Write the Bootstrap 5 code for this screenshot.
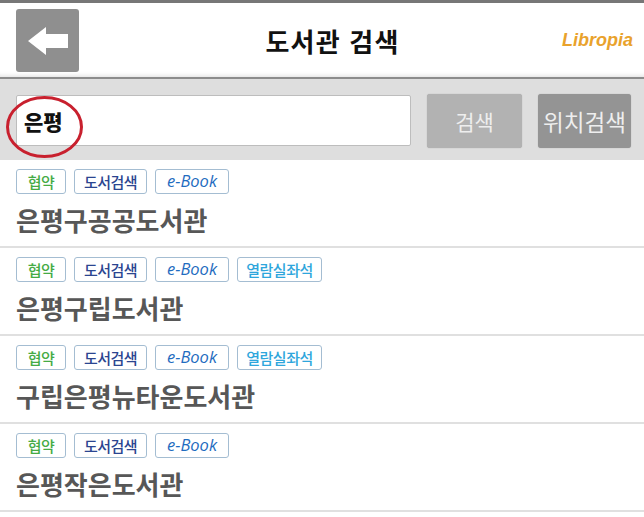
<!DOCTYPE html>
<html lang="ko">
<head>
<meta charset="utf-8">
<title>도서관 검색</title>
<link href="https://cdn.jsdelivr.net/npm/bootstrap@5.3.0/dist/css/bootstrap.min.css" rel="stylesheet">
<style>
html,body{height:517px;overflow:hidden;background:#fff}
body{font-family:"Noto Sans CJK KR","Liberation Sans",sans-serif}
.topstrip{height:3px;background:#777}
.appbar{height:76px;padding:6px 11px 0 16px;background:#fff;border-bottom:2px solid #8c8c8c;box-shadow:inset 0 -6px 5px -5px #ddd}
.backbtn{width:63px;height:63px;background:#8f8f8f;border-radius:3px;flex:none}
.apptitle{font-size:26px;font-weight:700;color:#111;letter-spacing:1.2px;line-height:1;margin:0 0 5px 24px}
.logo{font-family:"Liberation Sans",sans-serif;font-size:18px;font-weight:700;font-style:italic;color:#e9a22c;margin-bottom:6px}
.searchband{height:81px;background:#dedede;padding:15px 13px 0 16px;gap:16px;position:relative}
.searchbox{width:395px;height:51px;margin-top:1px;border:1px solid #bdbdbd;border-radius:2px;background:#fff;padding:0 7px;font-size:21px;font-weight:900;color:#111}
.searchbox:focus{outline:none}
.actbtn{height:54px;border:0;border-radius:3px;color:#eee;padding:0;font-size:22.5px;line-height:1;box-shadow:0 0 1px #999}
.actone{width:95px;background:#b2b2b2;font-size:21px}
.acttwo{width:93px;background:#949494}
.ring{position:absolute;left:6px;top:17px;width:77px;height:62px;pointer-events:none}
.libitem{height:88px;padding:9px 0 0 16px;border-bottom:2px solid #e0e0e0}
.tagline{gap:8px;height:25px}
.chip{height:25px;display:flex;align-items:center;justify-content:center;border:1px solid #a4bdd2;border-radius:3px;font-size:15px;font-weight:500;line-height:1;letter-spacing:-.5px;background:#fff}
.chipa{width:50px;color:#45ab45}
.chipb{width:73px;color:#2b4590}
.chipc{width:74px;color:#1f6cc0;font-family:"Open Sans",sans-serif;font-style:italic;font-size:16.5px;font-weight:500;letter-spacing:0}
.chipd{width:85px;color:#2ea6dc}
.libname{font-size:26px;font-weight:700;color:#575757;line-height:1;margin:13px 0 0;letter-spacing:0}
</style>
</head>
<body>
<div class="topstrip"></div>
<header class="appbar d-flex align-items-center justify-content-between">
  <div class="backbtn align-self-start d-flex align-items-center justify-content-center">
    <svg width="40" height="28" viewBox="0 0 40 28" aria-hidden="true"><path d="M0 14 18 0V7H40V21H18V28Z" fill="#fff"/></svg>
  </div>
  <h1 class="apptitle">도서관 검색</h1>
  <div class="logo">Libropia</div>
</header>
<div class="searchband d-flex align-items-start">
  <input class="searchbox" type="text" value="은평" aria-label="검색어">
  <button class="actbtn actone" type="button">검색</button>
  <button class="actbtn acttwo" type="button">위치검색</button>
  <svg class="ring" viewBox="0 0 77 62" aria-hidden="true"><ellipse cx="38.5" cy="31" rx="37" ry="29.5" fill="none" stroke="#c8202e" stroke-width="3"/></svg>
</div>
<main>
  <div class="libitem">
    <div class="tagline d-flex"><span class="chip chipa">협약</span><span class="chip chipb">도서검색</span><span class="chip chipc">e-Book</span></div>
    <p class="libname">은평구공공도서관</p>
  </div>
  <div class="libitem">
    <div class="tagline d-flex"><span class="chip chipa">협약</span><span class="chip chipb">도서검색</span><span class="chip chipc">e-Book</span><span class="chip chipd">열람실좌석</span></div>
    <p class="libname">은평구립도서관</p>
  </div>
  <div class="libitem">
    <div class="tagline d-flex"><span class="chip chipa">협약</span><span class="chip chipb">도서검색</span><span class="chip chipc">e-Book</span><span class="chip chipd">열람실좌석</span></div>
    <p class="libname">구립은평뉴타운도서관</p>
  </div>
  <div class="libitem">
    <div class="tagline d-flex"><span class="chip chipa">협약</span><span class="chip chipb">도서검색</span><span class="chip chipc">e-Book</span></div>
    <p class="libname">은평작은도서관</p>
  </div>
</main>
<script src="https://cdn.jsdelivr.net/npm/bootstrap@5.3.0/dist/js/bootstrap.bundle.min.js"></script>
</body>
</html>
